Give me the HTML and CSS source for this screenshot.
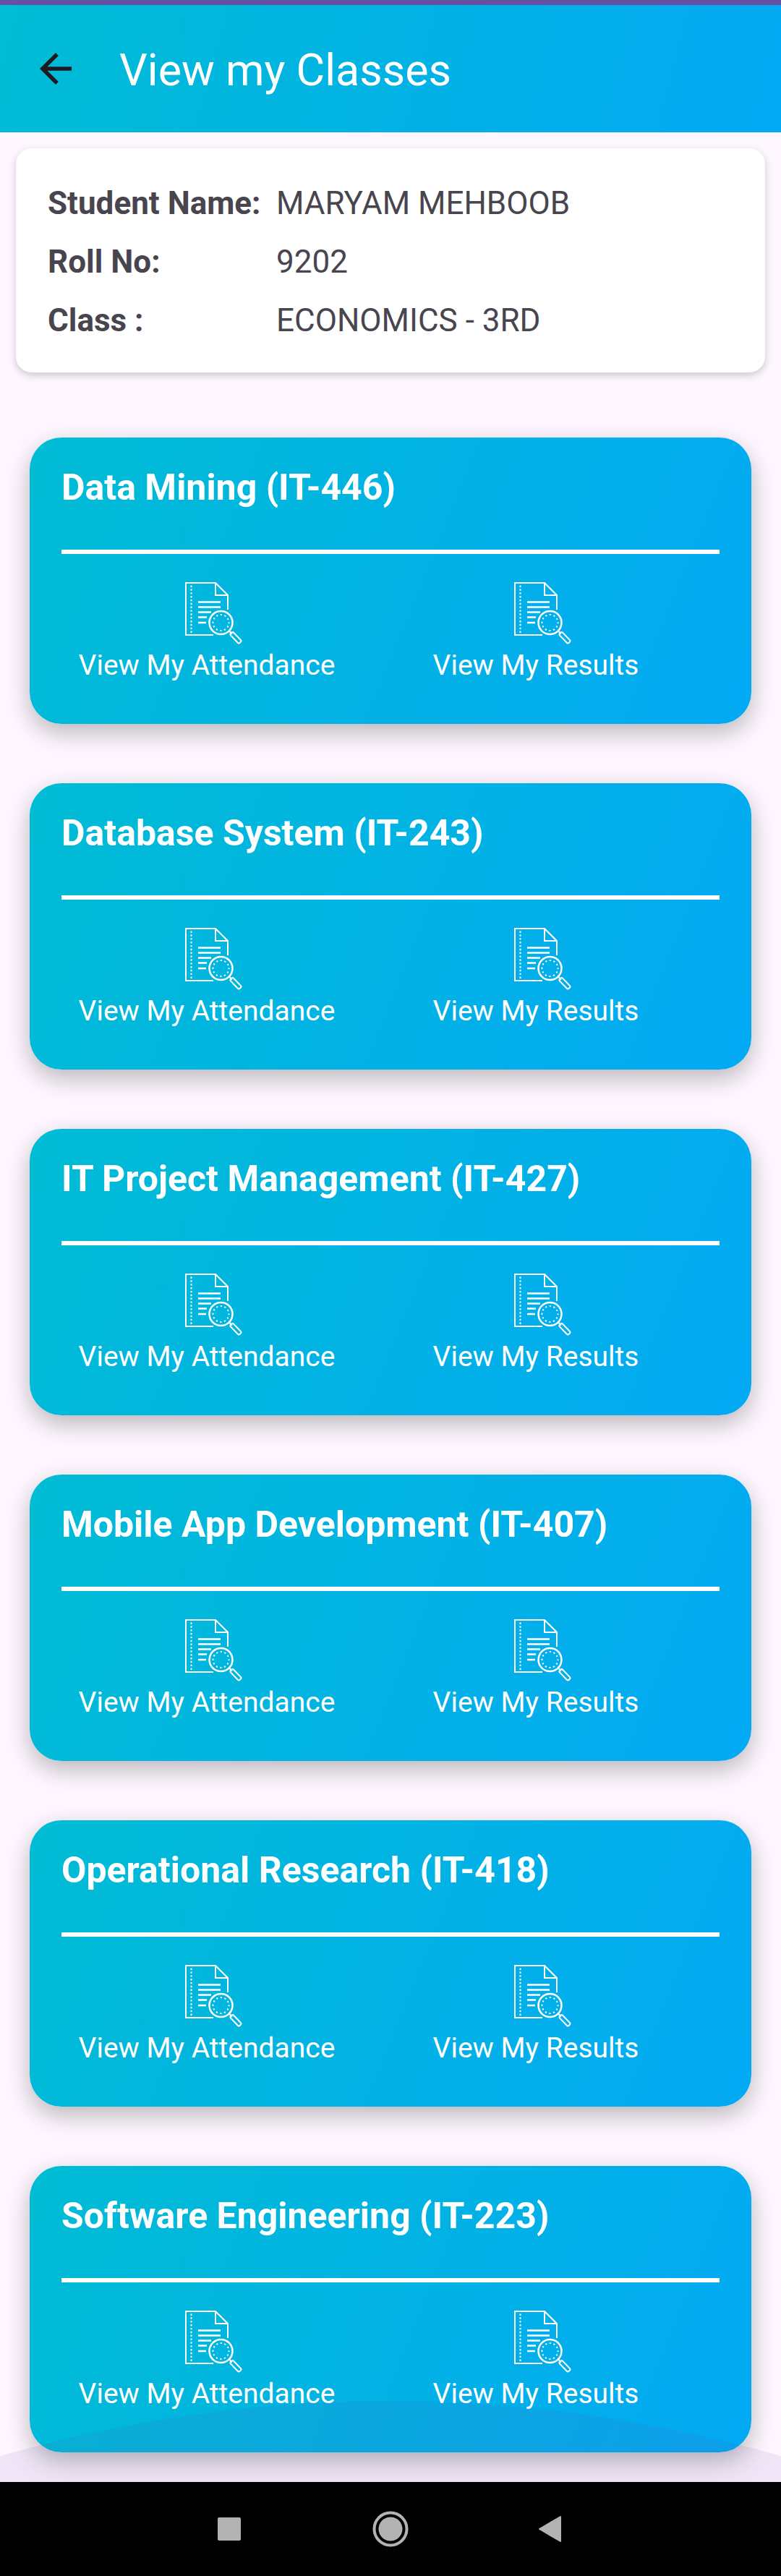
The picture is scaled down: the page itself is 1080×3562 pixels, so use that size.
FILE: index.html
```
<!DOCTYPE html>
<html lang="en">
<head>
<meta charset="utf-8">
<meta name="viewport" content="width=device-width, initial-scale=1">
<title>View my Classes</title>
<link rel="stylesheet" href="styles.css">
</head>
<body>
<svg class="sprite" aria-hidden="true">
  <symbol id="report" viewBox="0 0 80 88">
    <g fill="none" stroke="currentColor" stroke-width="2">
      <path d="M60 40V20L43 3H2V75H40M43 3V20H60"/>
      <path d="M19 29.500H50M19 36.500H50M19 43.500H37M19 50.500H31M19 58H30" stroke-width="2.500"/>
      <path d="M9.500 6.500V72" stroke-dasharray="2.400 2.450"/>
      <circle cx="50.500" cy="58" r="16" stroke-width="2.500"/>
      <circle cx="50.500" cy="58" r="11" stroke-dasharray="2.200 3.560" stroke-dashoffset="1.100"/>
      <path d="M62 69.500L66 73.500"/>
      <rect x="62" y="76" width="18" height="5.500" rx="2" transform="rotate(46 71 78.700)"/>
    </g>
  </symbol>
</svg>

<header class="app-bar">
  <button class="back" type="button" aria-label="Back">
    <svg viewBox="0 0 24 24" aria-hidden="true"><path d="M20 11H7.830l5.590-5.590L12 4l-8 8 8 8 1.410-1.410L7.830 13H20v-2z"/></svg>
  </button>
  <h1>View my Classes</h1>
</header>

<main class="content">
  <dl class="student">
    <dt>Student Name:</dt><dd>MARYAM MEHBOOB</dd>
    <dt>Roll No:</dt><dd>9202</dd>
    <dt>Class :</dt><dd>ECONOMICS - 3RD</dd>
  </dl>

  <div class="classes">
    <section class="card">
      <h2>Data Mining (IT-446)</h2>
      <div class="actions">
        <button type="button"><svg aria-hidden="true"><use href="#report"/></svg>View My Attendance</button>
        <button type="button"><svg aria-hidden="true"><use href="#report"/></svg>View My Results</button>
      </div>
    </section>
    <section class="card">
      <h2>Database System (IT-243)</h2>
      <div class="actions">
        <button type="button"><svg aria-hidden="true"><use href="#report"/></svg>View My Attendance</button>
        <button type="button"><svg aria-hidden="true"><use href="#report"/></svg>View My Results</button>
      </div>
    </section>
    <section class="card">
      <h2>IT Project Management (IT-427)</h2>
      <div class="actions">
        <button type="button"><svg aria-hidden="true"><use href="#report"/></svg>View My Attendance</button>
        <button type="button"><svg aria-hidden="true"><use href="#report"/></svg>View My Results</button>
      </div>
    </section>
    <section class="card">
      <h2>Mobile App Development (IT-407)</h2>
      <div class="actions">
        <button type="button"><svg aria-hidden="true"><use href="#report"/></svg>View My Attendance</button>
        <button type="button"><svg aria-hidden="true"><use href="#report"/></svg>View My Results</button>
      </div>
    </section>
    <section class="card">
      <h2>Operational Research (IT-418)</h2>
      <div class="actions">
        <button type="button"><svg aria-hidden="true"><use href="#report"/></svg>View My Attendance</button>
        <button type="button"><svg aria-hidden="true"><use href="#report"/></svg>View My Results</button>
      </div>
    </section>
    <section class="card">
      <h2>Software Engineering (IT-223)</h2>
      <div class="actions">
        <button type="button"><svg aria-hidden="true"><use href="#report"/></svg>View My Attendance</button>
        <button type="button"><svg aria-hidden="true"><use href="#report"/></svg>View My Results</button>
      </div>
    </section>
  </div>

  <!-- Overscroll glow at the end of the list -->
  <svg class="glow" viewBox="0 0 1080 112" preserveAspectRatio="none" aria-hidden="true"><path d="M0 76Q540-76 1080 76V112H0Z"/></svg>
</main>

<nav class="system-bar" aria-label="System">
  <button type="button" aria-label="Recent apps"><svg viewBox="0 0 50 50" aria-hidden="true"><rect x="9" y="9" width="32" height="32" rx="2"/></svg></button>
  <button type="button" aria-label="Home"><svg viewBox="0 0 50 50" aria-hidden="true"><circle cx="25" cy="25" r="16.500"/><circle class="ring" cx="25" cy="25" r="22.500"/></svg></button>
  <button type="button" aria-label="Back"><svg viewBox="0 0 50 50" aria-hidden="true"><path d="M37 8V42L8 25Z" stroke="#b3b3b3" stroke-width="2" stroke-linejoin="round"/></svg></button>
</nav>
</body>
</html>
```
FILE: styles.css
```
* {
  box-sizing: border-box;
}

body {
  margin: 0;
  min-height: 100vh;
  display: flex;
  flex-direction: column;
  background: #fef7ff;
  font-family: Roboto, "Noto Sans", sans-serif;
}

h1, h2, dl, dd {
  margin: 0;
}

button {
  padding: 0;
  border: 0;
  background: none;
  font: inherit;
  color: inherit;
}

svg {
  display: block;
}

.sprite {
  position: absolute;
  width: 0;
  height: 0;
}

.app-bar {
  display: flex;
  align-items: center;
  gap: 55px;
  height: 183px;
  padding: 0 44px;
  border-top: 7px solid #6650a4;
  background: linear-gradient(105deg, #00bcd4, #03a9f4) padding-box;
  color: #fff;
}

.back svg {
  width: 66px;
  height: 66px;
  fill: #1d1b20;
}

.app-bar h1 {
  padding-top: 4px;
  font-size: 61px;
  font-weight: 400;
  line-height: 72px;
}

.content {
  position: relative;
  flex: 1;
  padding: 22px 22px 41px;
}

.student {
  display: grid;
  grid-template-columns: 316px 1fr;
  row-gap: 29px;
  padding: 50px 44px 46px;
  border-radius: 22px;
  background: #fff;
  box-shadow: 0 4px 12px rgba(0, 0, 0, 0.2);
  color: #49454f;
  font-size: 44px;
  line-height: 52px;
}

.student dt {
  font-weight: 700;
  white-space: nowrap;
}

.classes {
  display: flex;
  flex-direction: column;
  gap: 82px;
  margin-top: 90px;
  padding: 0 19px;
}

.card {
  padding: 40px 44px 56px;
  border-radius: 44px;
  background: linear-gradient(112deg, #00bcd4, #03a9f4);
  box-shadow: 0 12px 34px rgba(0, 0, 0, 0.27);
  color: #fff;
}

.card h2 {
  padding-bottom: 57px;
  border-bottom: 6px solid #fff;
  font-size: 50px;
  font-weight: 700;
  line-height: 58px;
}

.actions {
  display: grid;
  grid-template-columns: 1fr 1fr;
  padding-top: 37px;
}

.actions button {
  display: flex;
  flex-direction: column;
  align-items: center;
  gap: 4px;
  padding-right: 53px;
  font-size: 39px;
  line-height: 50px;
}

.actions svg {
  width: 80px;
  height: 88px;
  margin-left: 18px;
}

.glow {
  position: absolute;
  left: 0;
  bottom: 0;
  width: 100%;
  height: 112px;
  fill: rgba(102, 80, 164, 0.1);
  pointer-events: none;
}

.system-bar {
  display: flex;
  justify-content: center;
  align-items: center;
  gap: 173px;
  height: 130px;
  background: #000;
  position: relative;
}

.system-bar svg {
  width: 50px;
  height: 50px;
  fill: #b3b3b3;
}

.system-bar .ring {
  fill: none;
  stroke: #b3b3b3;
  stroke-width: 4;
}
```
